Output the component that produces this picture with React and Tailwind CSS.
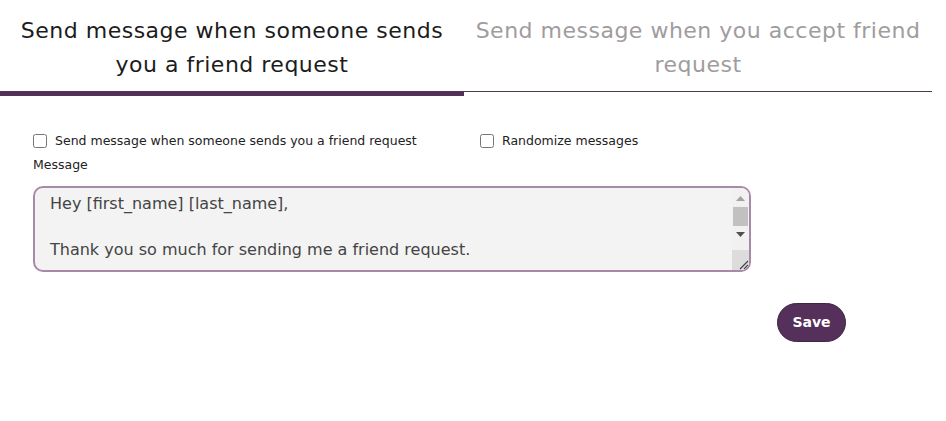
import React from "react";

const font = { fontFamily: '"DejaVu Sans", "Open Sans", sans-serif' };

function FakeScrollbar() {
  return (
    <div className="w-[17px] flex flex-col bg-[#f1f1f1] shrink-0">
      <div className="h-[17px] flex items-center justify-center mt-[2px]">
        <svg width="9" height="5" viewBox="0 0 9 5"><path d="M0 5 L4.5 0 L9 5 Z" fill="#a3a3a3" /></svg>
      </div>
      <div className="h-[19px] mx-[1px] bg-[#c1c1c1]" />
      <div className="h-[17px] flex items-center justify-center">
        <svg width="9" height="5" viewBox="0 0 9 5"><path d="M0 0 L9 0 L4.5 5 Z" fill="#505050" /></svg>
      </div>
      <div className="flex-1" />
      <div className="h-[20px] bg-[#dcdcdc] flex items-end justify-end">
        <svg width="12" height="12" viewBox="0 0 12 12">
          <path d="M3 11 L11 3 M7 11 L11 7" stroke="#444" strokeWidth="1.2" />
        </svg>
      </div>
    </div>
  );
}

export default function App() {
  const text =
    "Hey [first_name] [last_name],\n\nThank you so much for sending me a friend request.\n\nI look forward to connecting with you.\n\nBest regards";
  return (
    <div className="w-[946px] h-[421px] bg-white" style={font}>
      <div className="flex w-[932px]">
        <div className="w-[464px] h-[96px] border-b-[5px] border-[#55305a] flex items-center justify-center pt-[4px]">
          <div className="text-[22px] leading-[34px] tracking-[0.5px] text-[#1c1c1c] text-center whitespace-nowrap">
            Send message when someone sends
            <br />
            you a friend request
          </div>
        </div>
        <div className="flex-1 h-[92px] border-b border-[#4a3a4c] flex items-center justify-center pt-[4px]">
          <div className="text-[22px] leading-[34px] tracking-[0.5px] text-[#a09c9e] text-center whitespace-nowrap">
            Send message when you accept friend
            <br />
            request
          </div>
        </div>
      </div>
      <div className="px-[33px] pt-[36px]">
        <div className="flex items-start">
          <label className="flex items-center gap-[8px] w-[447px] text-[12.5px] text-[#222]">
            <input type="checkbox" className="w-[14px] h-[14px] m-0" />
            Send message when someone sends you a friend request
          </label>
          <label className="flex items-center gap-[8px] text-[12.5px] text-[#222]">
            <input type="checkbox" className="w-[14px] h-[14px] m-0" />
            Randomize messages
          </label>
        </div>
        <div className="text-[12.5px] text-[#222] mt-[5px] leading-[18px]">Message</div>
        <div className="mt-[12px] flex w-[718px] h-[86px] border-2 border-[#a98aa6] rounded-[10px] bg-[#f3f3f3] overflow-hidden">
          <textarea
            className="flex-1 h-full bg-transparent pl-[15px] pr-[2px] py-[4px] text-[16px] leading-[23px] text-[#444] outline-none resize-none overflow-hidden"
            defaultValue={text}
          />
          <FakeScrollbar />
        </div>
        <div className="flex justify-end w-[813px] mt-[31px]">
          <button className="h-[39px] w-[69px] rounded-full bg-[#55305a] border border-[#3f2443] text-white text-[14px] font-bold">
            Save
          </button>
        </div>
      </div>
    </div>
  );
}
